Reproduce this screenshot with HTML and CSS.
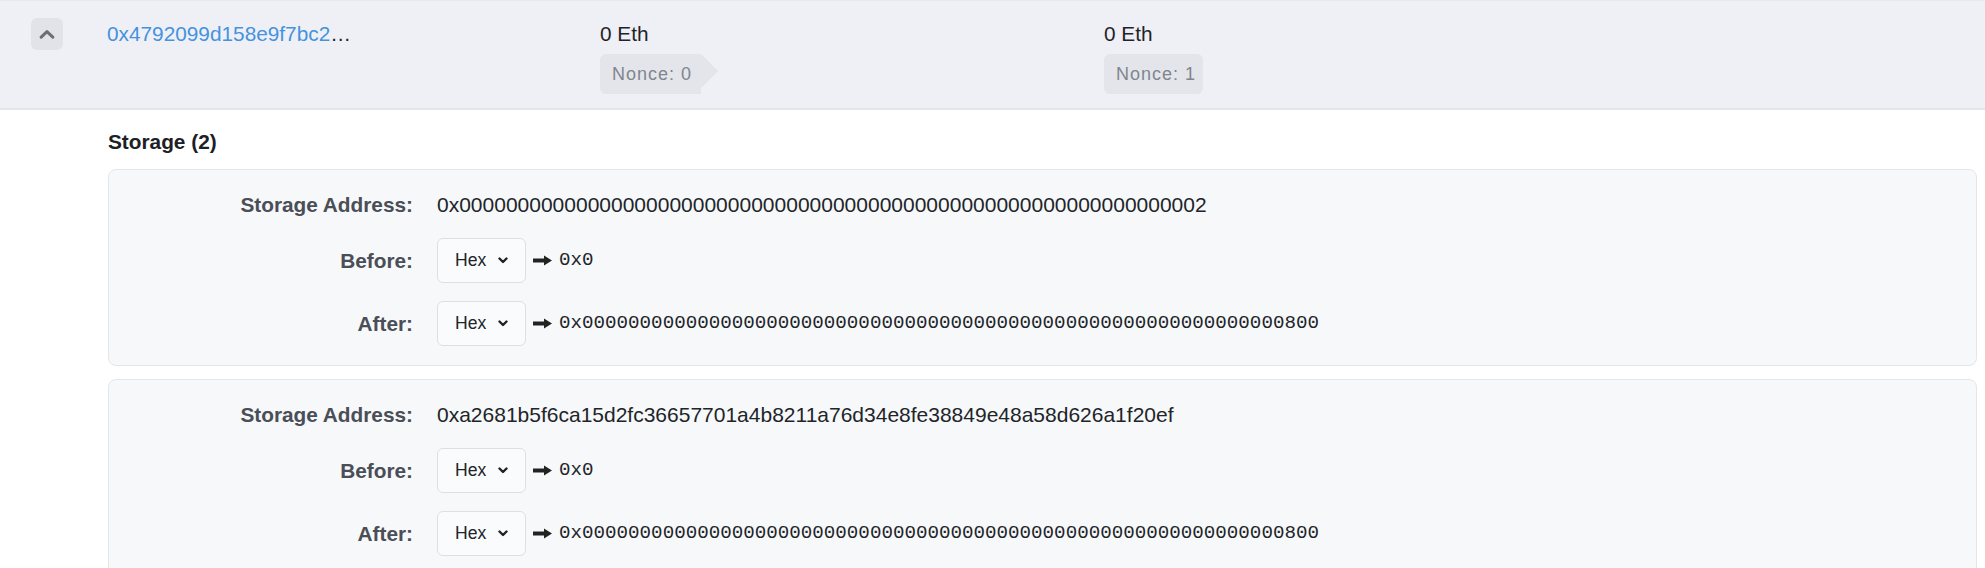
FILE: index.html
```html
<!DOCTYPE html>
<html>
<head>
<meta charset="utf-8">
<link rel="stylesheet" href="styles.css">
</head>
<body>
<div class="account-row">
  <div class="toggle-cell">
    <button class="toggle" type="button">
      <svg width="16" height="10" viewBox="0 0 16 10"><path d="M2.2 8.2 L8 2.6 L13.8 8.2" fill="none" stroke="#6b6f78" stroke-width="3" stroke-linecap="round" stroke-linejoin="round"/></svg>
    </button>
  </div>
  <div class="addr-cell"><a class="addr" href="#">0x4792099d158e9f7bc2fa16ef7b0d6d03f0e4c9a5</a></div>
  <div class="bal-cell">
    <div class="eth">0 Eth</div>
    <span class="nonce nonce-arrow">Nonce: 0</span>
  </div>
  <div class="bal-cell">
    <div class="eth">0 Eth</div>
    <span class="nonce">Nonce: 1</span>
  </div>
</div>

<div class="details">
  <h3 class="section-title">Storage (2)</h3>

  <div class="card">
    <div class="label">Storage Address:</div>
    <div class="value">0x0000000000000000000000000000000000000000000000000000000000000002</div>
    <div class="label">Before:</div>
    <div class="value flow">
      <div class="select"><span>Hex</span><svg width="10" height="7" viewBox="0 0 10 7"><path d="M1.5 1.5 L5 5 L8.5 1.5" fill="none" stroke="#222" stroke-width="2.4" stroke-linecap="round" stroke-linejoin="round"/></svg></div>
      <svg class="arrow" width="19" height="11" viewBox="0 0 19 11"><path d="M0 3.6 H11 V0.5 L19 5.5 L11 10.5 V7.4 H0 Z" fill="#222"/></svg>
      <span class="mono">0x0</span>
    </div>
    <div class="label">After:</div>
    <div class="value flow">
      <div class="select"><span>Hex</span><svg width="10" height="7" viewBox="0 0 10 7"><path d="M1.5 1.5 L5 5 L8.5 1.5" fill="none" stroke="#222" stroke-width="2.4" stroke-linecap="round" stroke-linejoin="round"/></svg></div>
      <svg class="arrow" width="19" height="11" viewBox="0 0 19 11"><path d="M0 3.6 H11 V0.5 L19 5.5 L11 10.5 V7.4 H0 Z" fill="#222"/></svg>
      <span class="mono">0x0000000000000000000000000000000000000000000000000000000000000800</span>
    </div>
  </div>

  <div class="card">
    <div class="label">Storage Address:</div>
    <div class="value">0xa2681b5f6ca15d2fc36657701a4b8211a76d34e8fe38849e48a58d626a1f20ef</div>
    <div class="label">Before:</div>
    <div class="value flow">
      <div class="select"><span>Hex</span><svg width="10" height="7" viewBox="0 0 10 7"><path d="M1.5 1.5 L5 5 L8.5 1.5" fill="none" stroke="#222" stroke-width="2.4" stroke-linecap="round" stroke-linejoin="round"/></svg></div>
      <svg class="arrow" width="19" height="11" viewBox="0 0 19 11"><path d="M0 3.6 H11 V0.5 L19 5.5 L11 10.5 V7.4 H0 Z" fill="#222"/></svg>
      <span class="mono">0x0</span>
    </div>
    <div class="label">After:</div>
    <div class="value flow">
      <div class="select"><span>Hex</span><svg width="10" height="7" viewBox="0 0 10 7"><path d="M1.5 1.5 L5 5 L8.5 1.5" fill="none" stroke="#222" stroke-width="2.4" stroke-linecap="round" stroke-linejoin="round"/></svg></div>
      <svg class="arrow" width="19" height="11" viewBox="0 0 19 11"><path d="M0 3.6 H11 V0.5 L19 5.5 L11 10.5 V7.4 H0 Z" fill="#222"/></svg>
      <span class="mono">0x0000000000000000000000000000000000000000000000000000000000000800</span>
    </div>
  </div>
</div>
</body>
</html>
```
FILE: styles.css
```css
html, body {
  margin: 0;
  padding: 0;
}
body {
  font-family: "Liberation Sans", Arial, sans-serif;
  font-size: 20.8px;
  line-height: 31px;
  color: #212529;
  background: #ffffff;
}

.account-row {
  display: grid;
  grid-template-columns: 76px 493px 504px 1fr;
  align-items: start;
  padding: 17px 8px 14px 31px;
  background: #eff0f5;
  border-top: 1px solid #e6e8ee;
  border-bottom: 2px solid #e4e6ed;
}

.toggle-cell {
  display: flex;
}
.toggle {
  width: 32px;
  height: 32px;
  padding: 0;
  margin: 0;
  border: none;
  border-radius: 6px;
  background: #e1e3e9;
  display: flex;
  align-items: center;
  justify-content: center;
}

.addr-cell {
  width: 248px;
  white-space: nowrap;
  overflow: hidden;
  text-overflow: ellipsis;
  color: #212529;
}
.addr {
  color: #4592de;
  text-decoration: none;
}

.bal-cell {
  display: flex;
  flex-direction: column;
  align-items: flex-start;
  gap: 5px;
}
.eth {
  color: #1f2328;
}
.nonce {
  position: relative;
  display: inline-flex;
  align-items: center;
  height: 40px;
  padding: 0 7px 0 12px;
  background: #e3e5eb;
  border-radius: 6px;
  color: #80858e;
  font-size: 18px;
  letter-spacing: 1px;
}
.nonce-arrow {
  padding-right: 9px;
  border-top-right-radius: 0;
  border-bottom-right-radius: 0;
}
.nonce-arrow::after {
  content: "";
  position: absolute;
  left: 100%;
  top: 0;
  width: 17px;
  height: 34px;
  background: #e3e5eb;
  clip-path: polygon(0 0, 100% 50%, 0 100%);
}

.details {
  padding: 0 8px 0 108px;
}
.section-title {
  margin: 16px 0 12px 0;
  font-size: 20.8px;
  line-height: 31px;
  font-weight: bold;
  color: #1d2025;
}

.card {
  display: grid;
  grid-template-columns: 304px 1fr;
  column-gap: 24px;
  row-gap: 18px;
  align-items: center;
  padding: 19px 0;
  margin-bottom: 13px;
  background: #f7f8fa;
  border: 1px solid #e3e6ed;
  border-radius: 8px;
}
.label {
  text-align: right;
  font-weight: bold;
  color: #4a4e57;
}
.value {
  color: #212529;
  font-size: 21px;
  white-space: nowrap;
}
.flow {
  display: flex;
  align-items: center;
  gap: 7px;
}
.select {
  box-sizing: border-box;
  width: 89px;
  height: 45px;
  display: flex;
  align-items: center;
  gap: 12px;
  padding-left: 17px;
  background: #fafbfc;
  border: 1px solid #dcdfe6;
  border-radius: 6px;
  font-size: 17.6px;
  color: #212529;
}
.arrow {
  display: block;
}
.mono {
  font-family: "Liberation Mono", "DejaVu Sans Mono", monospace;
  font-size: 19.2px;
  color: #212529;
}
```
